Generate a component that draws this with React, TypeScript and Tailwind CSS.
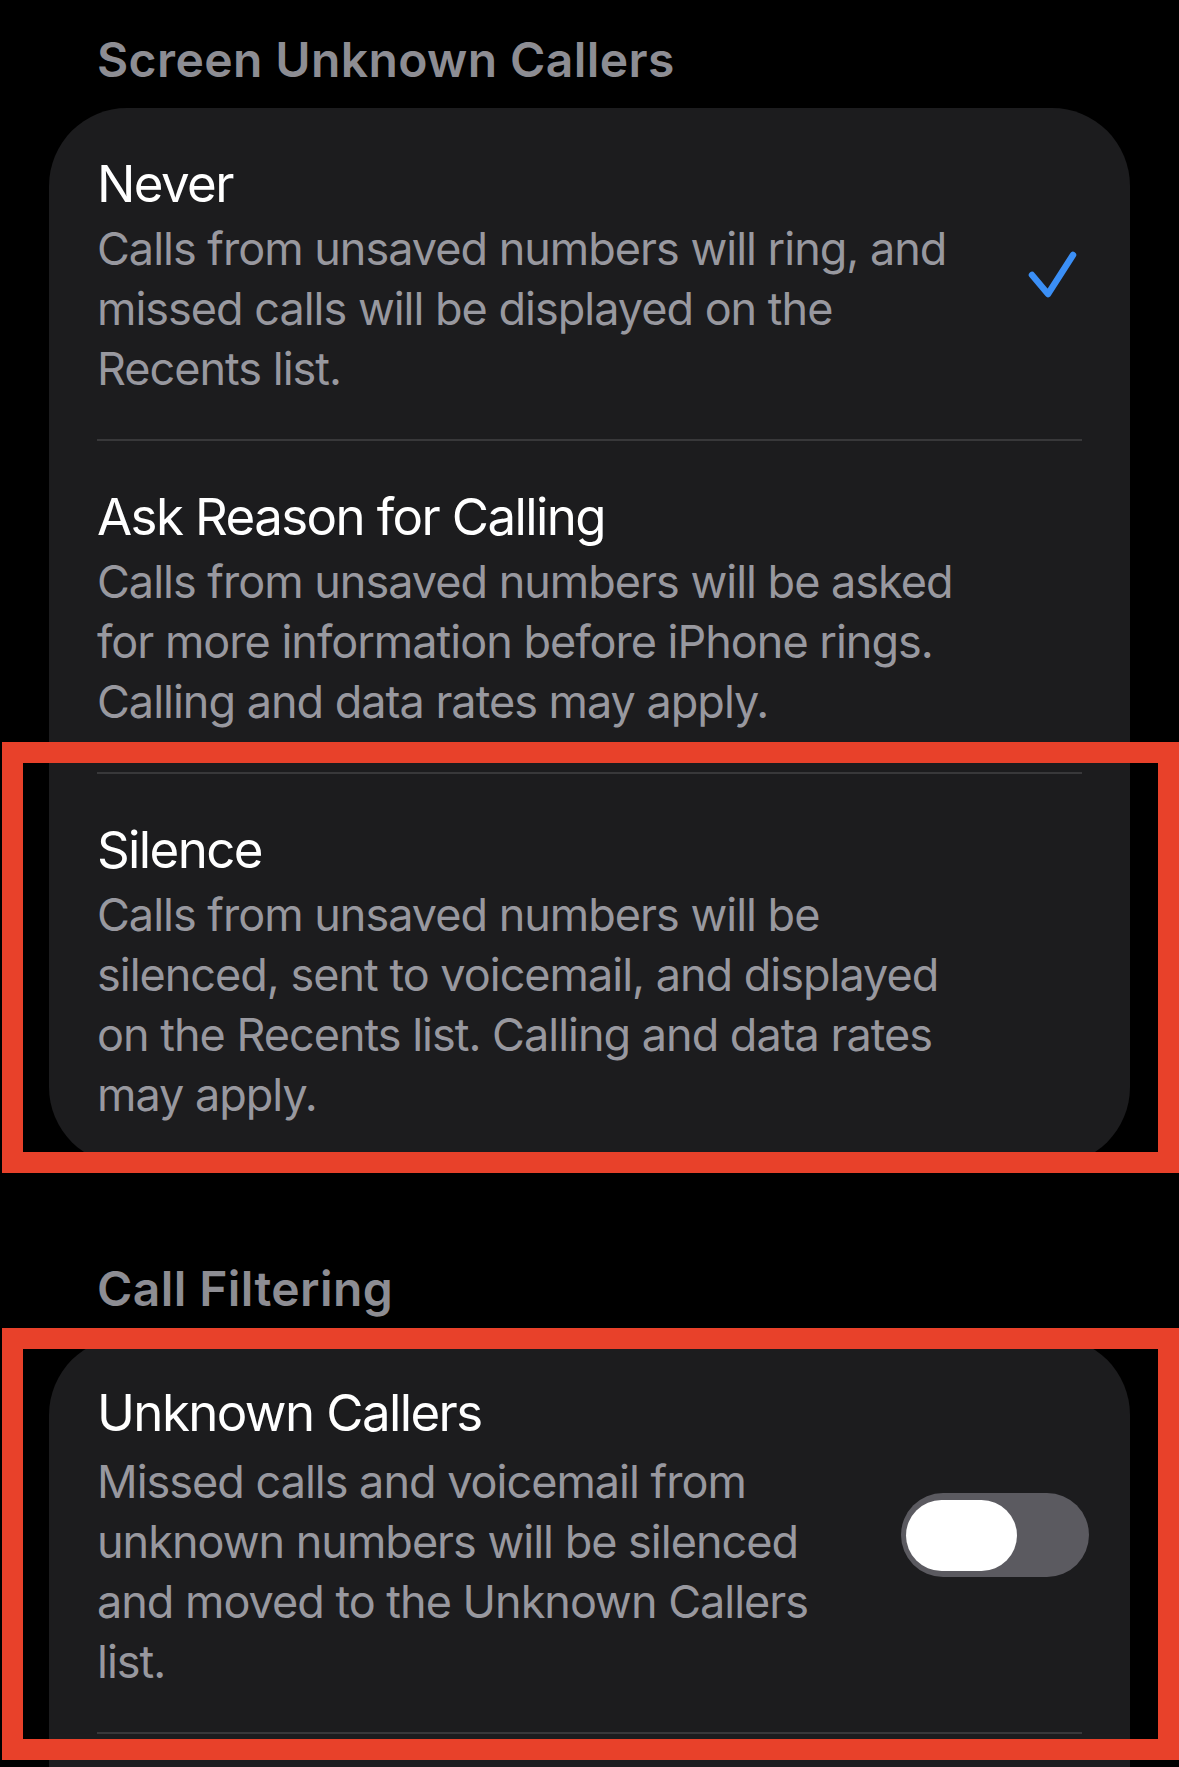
import React, { useState } from 'react';

interface Option {
  title: string;
  lines: string[];
}

const options: Option[] = [
  {
    title: 'Never',
    lines: ['Calls from unsaved numbers will ring, and', 'missed calls will be displayed on the', 'Recents list.'],
  },
  {
    title: 'Ask Reason for Calling',
    lines: ['Calls from unsaved numbers will be asked', 'for more information before iPhone rings.', 'Calling and data rates may apply.'],
  },
  {
    title: 'Silence',
    lines: [
      'Calls from unsaved numbers will be',
      'silenced, sent to voicemail, and displayed',
      'on the Recents list. Calling and data rates',
      'may apply.',
    ],
  },
];

const font = { fontFamily: 'Inter, "Noto Sans", sans-serif' };

const Separator = () => <div className="mx-[48px] h-[2px] bg-[#38383a]" />;

const RowText = ({ title, lines }: Option) => (
  <div className="flex flex-col">
    <div className="text-[51px] leading-[70px] tracking-[-1.6px] text-white">{title}</div>
    {lines.map(line => (
      <span key={line} className="whitespace-nowrap text-[45px] leading-[60px] tracking-[-1px] text-[#98989f]">
        {line}
      </span>
    ))}
  </div>
);

const Header = ({ children }: { children: React.ReactNode }) => (
  <h2 className="px-[97px] text-[48px] font-semibold leading-[48px] tracking-[0.4px] text-[#8d8d93] mb-[24px]">
    {children}
  </h2>
);

export default function App() {
  const [selected, setSelected] = useState(0);
  const [unknownOn, setUnknownOn] = useState(false);

  return (
    <div className="relative min-h-screen overflow-hidden bg-black pt-[36px]" style={font}>
      <Header>Screen Unknown Callers</Header>

      <div className="mx-[49px] overflow-hidden rounded-[78px] bg-[#1c1c1e]">
        {options.map((opt, i) => (
          <div key={opt.title}>
            {i > 0 && <Separator />}
            <button
              onClick={() => setSelected(i)}
              className="flex w-full items-center justify-between px-[48px] pt-[41px] pb-[40px] text-left"
            >
              <RowText {...opt} />
              {selected === i && (
                <svg width="51" height="51" viewBox="0 0 51 51" fill="none" className="mr-[4px]">
                  <path
                    d="M5 26 L21 45 L46 6"
                    stroke="#3b8ff6"
                    strokeWidth="6.5"
                    strokeLinecap="round"
                    strokeLinejoin="round"
                  />
                </svg>
              )}
            </button>
          </div>
        ))}
      </div>

      <div className="h-[100px]" />
      <Header>Call Filtering</Header>

      <div className="mx-[49px] rounded-t-[78px] bg-[#1c1c1e] pb-[60px]">
        <div className="flex items-center justify-between px-[48px] pt-[41px] pb-[40px]">
          <div className="flex flex-col">
            <div className="text-[51px] leading-[70px] tracking-[-1.6px] text-white mb-[4px]">Unknown Callers</div>
            {['Missed calls and voicemail from', 'unknown numbers will be silenced', 'and moved to the Unknown Callers', 'list.'].map(line => (
              <span key={line} className="whitespace-nowrap text-[45px] leading-[60px] tracking-[-1px] text-[#98989f]">
                {line}
              </span>
            ))}
          </div>
          <button
            onClick={() => setUnknownOn(v => !v)}
            className={`-mr-[7px] flex h-[84px] w-[188px] shrink-0 items-center rounded-full px-[5px] ${
              unknownOn ? 'justify-end bg-[#34c759]' : 'justify-start bg-[#5b5a60]'
            }`}
          >
            <span className="block h-[71px] w-[111px] rounded-full bg-white" />
          </button>
        </div>
        <Separator />
      </div>

      {/* annotation boxes */}
      <div className="pointer-events-none absolute left-[2px] top-[742px] h-[431px] w-[1177px] border-[21px] border-[#e8412a]" />
      <div className="pointer-events-none absolute left-[2px] top-[1328px] h-[432px] w-[1177px] border-[21px] border-[#e8412a]" />
    </div>
  );
}
